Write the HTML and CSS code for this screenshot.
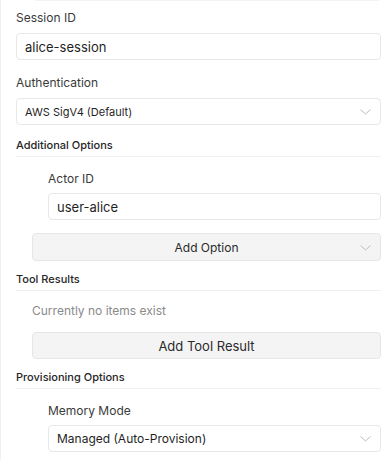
FILE: index.html
```html
<!DOCTYPE html>
<html lang="en">
<head>
    <meta charset="UTF-8">
    <meta name="viewport" content="width=device-width, initial-scale=1.0">
    <link rel="stylesheet" href="styles.css">
    <title>Session Settings</title>
</head>
<body>
    <div class="panel">
        <div class="top-edge"></div>

        <div class="field">
            <label class="field-label">Session ID</label>
            <div class="input">alice-session</div>
        </div>

        <div class="field">
            <label class="field-label">Authentication</label>
            <div class="select small">
                <span>AWS SigV4 (Default)</span>
                <svg class="chevron" width="11" height="6" viewBox="0 0 11 6"><path d="M0.5 0.5 L5.5 5 L10.5 0.5" fill="none" stroke="#bdbdbd" stroke-width="1"/></svg>
            </div>
        </div>

        <div class="section">
            <h3 class="section-title">Additional Options</h3>
            <div class="section-body">
                <div class="field nested">
                    <label class="field-label">Actor ID</label>
                    <div class="input">user-alice</div>
                </div>
                <div class="button with-chevron">
                    <span>Add Option</span>
                    <svg class="chevron" width="11" height="6" viewBox="0 0 11 6"><path d="M0.5 0.5 L5.5 5 L10.5 0.5" fill="none" stroke="#bdbdbd" stroke-width="1"/></svg>
                </div>
            </div>
        </div>

        <div class="section">
            <h3 class="section-title">Tool Results</h3>
            <div class="section-body">
                <p class="empty">Currently no items exist</p>
                <div class="button big">Add Tool Result</div>
            </div>
        </div>

        <div class="section">
            <h3 class="section-title">Provisioning Options</h3>
            <div class="section-body">
                <div class="field nested">
                    <label class="field-label">Memory Mode</label>
                    <div class="select">
                        <span>Managed (Auto-Provision)</span>
                        <svg class="chevron" width="11" height="6" viewBox="0 0 11 6"><path d="M0.5 0.5 L5.5 5 L10.5 0.5" fill="none" stroke="#bdbdbd" stroke-width="1"/></svg>
                    </div>
                </div>
            </div>
        </div>
    </div>
</body>
</html>
```

FILE: styles.css
```css
body {
    margin: 0;
    padding: 0;
    background: #ffffff;
    font-family: Inter, "Noto Sans", sans-serif;
    color: #1f1f1f;
}

.panel {
    border-left: 1px solid #f0f0f0;
    padding: 0 8px 0 15px;
    min-height: 460px;
    box-sizing: border-box;
}

/* faint edge of the card above */
.top-edge {
    height: 1px;
    background: #f3f3f3;
    margin: 0 2px 9px 19px;
}

.field {
    display: flex;
    flex-direction: column;
    margin-bottom: 15px;
}

.field-label {
    font-size: 12px;
    line-height: 16px;
    color: #3a3a3a;
    margin-bottom: 7px;
}

.input,
.select {
    box-sizing: border-box;
    height: 27px;
    border: 1px solid #e8e8e8;
    border-radius: 4px;
    padding: 0 8px;
    display: flex;
    align-items: center;
    font-size: 13px;
    color: #1f1f1f;
}

.select {
    justify-content: space-between;
    font-size: 12px;
}

.select.small {
    font-size: 11px;
}

.chevron {
    margin-right: 1px;
}

.section {
    margin-top: -2px;
}

.section-title {
    margin: 0;
    font-size: 11px;
    line-height: 14px;
    font-weight: 500;
    color: #262626;
    padding-bottom: 4px;
    border-bottom: 1px solid #efefef;
}

.section-body {
    padding: 14px 0 13px 16px;
}

.field.nested {
    padding-left: 16px;
    margin-bottom: 13px;
}

.field.nested .field-label {
    margin-bottom: 6px;
}

.button {
    box-sizing: border-box;
    height: 28px;
    background: #f4f4f4;
    border: 1px solid #e6e6e6;
    border-radius: 4px;
    display: flex;
    align-items: center;
    justify-content: center;
    font-size: 12px;
    color: #2a2a2a;
    position: relative;
}

.button.with-chevron .chevron {
    position: absolute;
    right: 8px;
    top: 11px;
}

.button.big {
    font-size: 13px;
    height: 27px;
}

.empty {
    margin: -2px 0 13px 0;
    font-size: 12px;
    line-height: 16px;
    color: #8a8a8a;
}
```
